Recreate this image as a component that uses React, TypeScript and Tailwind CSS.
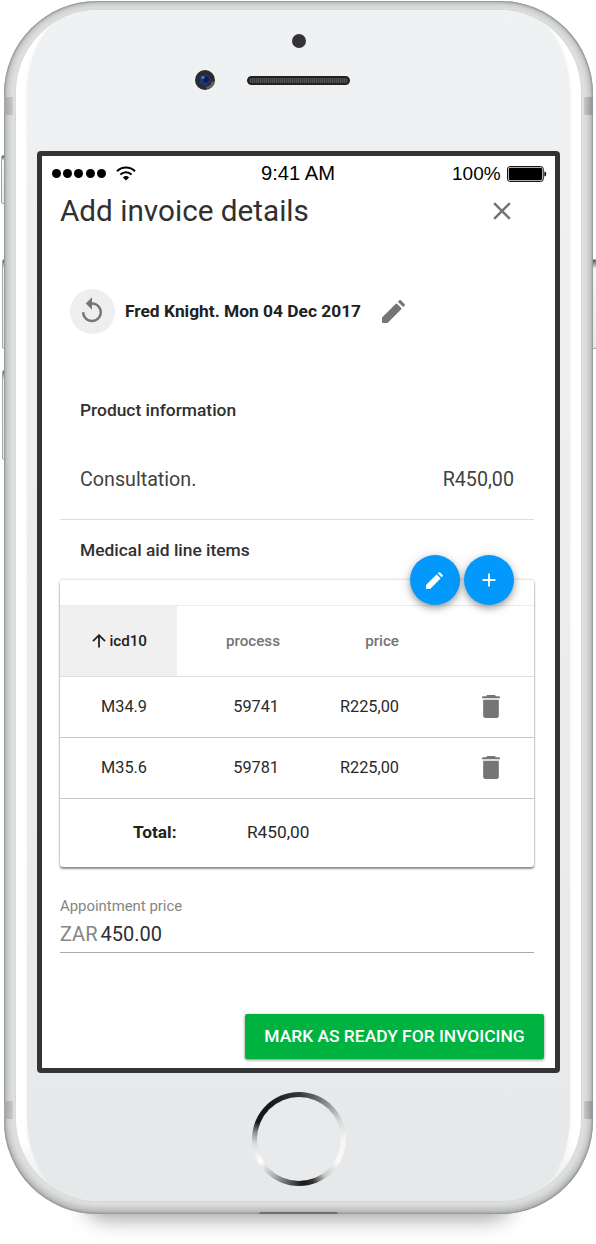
import React from "react";
import { MdAdd, MdClose, MdReplay } from "react-icons/md";

const items = [
  { code: "M34.9", process: "59741", price: "R225,00" },
  { code: "M35.6", process: "59781", price: "R225,00" },
];

function Pencil({ className }: { className: string }) {
  return (
    <svg className={className} viewBox="0 0 68 68" fill="currentColor">
      <path d="M0 52 41 11a2 2 0 0 1 3 0L57 24a2 2 0 0 1 0 3L17 67a3 3 0 0 1-2 1H3a3 3 0 0 1-3-3z" />
      <path d="M47 5.500 51 1.500a4 4 0 0 1 5.500 0l10 10a4 4 0 0 1 0 5.500l-4 4z" />
    </svg>
  );
}

function Trash({ className }: { className: string }) {
  return (
    <svg className={className} viewBox="0 0 54 69" fill="currentColor">
      <path d="M16 0h22a3 3 0 0 1 2.500 3.500H50a4 4 0 0 1 4 4V10H0V7.500a4 4 0 0 1 4-4h9.500A3 3 0 0 1 16 0z" />
      <path d="M3.500 14h47v48a7 7 0 0 1-7 7h-33a7 7 0 0 1-7-7z" />
    </svg>
  );
}

function StatusBar() {
  return (
    <div className="flex h-[35px] items-center pl-[10px] font-['Liberation_Sans'] text-[20px] leading-[35px] text-black">
      <div className="flex w-[209px] items-center gap-[2.2px]">
        {[0, 1, 2, 3, 4].map((i) => (
          <span key={i} className="size-[9px] rounded-full bg-black" />
        ))}
        <svg className="ml-[8.500px] h-[15px] w-[20px]" viewBox="0 0 20 15" fill="none" stroke="#000" strokeWidth="2">
          <path d="M1 5.200a12.800 12.800 0 0 1 18 0" />
          <path d="M4.300 8.600a8.100 8.100 0 0 1 11.400 0" />
          <path d="M10 14.600 6.900 11.400a4.400 4.400 0 0 1 6.200 0z" fill="#000" stroke="none" />
        </svg>
      </div>
      <div className="w-[191px] text-[20.200px] whitespace-nowrap">9:41 AM</div>
      <div className="flex items-center gap-[6px]">
        <span className="w-[49px] text-[19px]">100%</span>
        <svg className="h-[16px] w-[40px]" viewBox="0 0 40 16">
          <rect x="0.6" y="0.6" width="35.6" height="14.800" rx="2.400" fill="#fff" stroke="#000" strokeWidth="1" />
          <rect x="1.800" y="1.800" width="33.200" height="12.400" rx="1.400" fill="#000" />
          <path d="M37.400 5.400c2.400.6 2.400 4.600 0 5.200z" fill="#000" />
        </svg>
      </div>
    </div>
  );
}

function Fab({ children }: { children: React.ReactNode }) {
  return (
    <button className="flex size-[50px] items-center justify-center rounded-full bg-[#0398fb] text-white shadow-[0_3px_6px_rgba(0,0,0,0.3),0_2px_14px_rgba(0,0,0,0.14)]">
      {children}
    </button>
  );
}

function LineItems() {
  return (
    <div className="relative mr-[21px] ml-[18px] mt-[18px] h-[287px] rounded-[3px] bg-white text-[16.300px] text-[#2a2a2a] shadow-[0_2px_2px_rgba(0,0,0,0.4),0_0_3px_rgba(0,0,0,0.25)]">
      <div className="absolute -top-[25px] right-[20px] flex gap-[4.500px]">
        <Fab><Pencil className="size-[17px]" /></Fab>
        <Fab><MdAdd className="size-[22px]" /></Fab>
      </div>
      <div className="h-[26px] border-b border-[#ececec]" />
      <div className="flex h-[71px] items-center border-b border-[#dedede] text-[15.200px] font-medium text-[#757575]">
        <div className="flex h-full w-[117px] items-center justify-end gap-[3px] bg-[#f0f0f0] pr-[30px] text-[#212121]">
          <svg className="size-[14px]" viewBox="0 0 14 14" fill="none" stroke="currentColor" strokeWidth="1.800">
            <path d="M7 13.500V1.500M1 7.200 7 1.200l6 6" />
          </svg>
          <span>icd10</span>
        </div>
        <div className="w-[103px] text-right">process</div>
        <div className="w-[119px] text-right">price</div>
      </div>
      {items.map((item) => (
        <div key={item.code} className="flex h-[61px] items-center border-b border-[#c8c8c8]">
          <div className="w-[87px] text-right">{item.code}</div>
          <div className="w-[132px] text-right">{item.process}</div>
          <div className="w-[120px] text-right">{item.price}</div>
          <Trash className="mb-[2px] ml-[83px] h-[23px] w-[18px] text-[#757575]" />
        </div>
      ))}
      <div className="flex h-[68px] items-center text-[17.300px]">
        <div className="w-[116.500px] text-right font-bold text-[#212121]">Total:</div>
        <div className="w-[133px] text-right">R450,00</div>
      </div>
    </div>
  );
}

function InvoiceScreen() {
  return (
    <div className="flex h-[922px] w-[523px] flex-col rounded-[4px] border-[5px] border-[#343434] bg-white font-['Roboto'] text-[#303030]">
      <StatusBar />
      <div className="flex h-[40px] items-center justify-between pr-[38px] pl-[18px] text-[29.700px]">
        <h1>Add invoice details</h1>
        <MdClose className="size-[30px] text-[#757575]" />
      </div>
      <div className="mt-[58px] flex h-[45px] items-center pl-[28px]">
        <div className="flex size-[45px] items-center justify-center rounded-full bg-[#eee]">
          <MdReplay className="mr-px mb-[2px] size-[30px] text-[#757575]" />
        </div>
        <div className="ml-[10px] w-[257px] text-[17.350px] font-bold whitespace-nowrap text-[#212121]">Fred Knight. Mon 04 Dec 2017</div>
        <Pencil className="size-[23px] text-[#757575]" />
      </div>
      <h2 className="mt-[64px] pl-[38px] text-[17.400px] leading-[24px] font-medium">Product information</h2>
      <div className="mr-[21px] ml-[18px] mt-[17px] flex h-[81px] items-center justify-between border-b border-[#dedede] px-[20px] pt-[2px] text-[19.700px] text-[#424242]">
        <span>Consultation.</span>
        <span>R450,00</span>
      </div>
      <h2 className="mt-[18px] pl-[38px] text-[17.400px] leading-[24px] font-medium">Medical aid line items</h2>
      <LineItems />
      <div className="mr-[21px] ml-[18px] mt-[29px] flex h-[57px] flex-col border-b border-[#aaa]">
        <label className="text-[14.900px] leading-[20px] text-[#858585]">Appointment price</label>
        <div className="flex gap-[3px] pt-[5px] text-[20px] leading-[26px]">
          <span className="text-[#858585]">ZAR</span>
          <span>450.00</span>
        </div>
      </div>
      <button className="mt-[61px] mr-[11px] h-[45px] w-[299px] self-end rounded-[2px] bg-[#00b341] text-[17.400px] font-medium whitespace-nowrap text-white shadow-[0_1px_3px_rgba(0,0,0,0.5)]">
        MARK AS READY FOR INVOICING
      </button>
    </div>
  );
}

const sideButton =
  "absolute w-[6px] rounded-[2px] border border-[#a5a8a9] bg-linear-to-b from-[#555] via-[#f4f6f7] via-10% to-[#e6e9ea]";
const band = "absolute h-[18px] w-[9px]";

export default function App() {
  return (
    <div className="relative h-[1244px] w-[596px] overflow-hidden bg-white pt-px pl-[4px]">
      <div className="absolute top-[1170px] left-[85px] h-[40px] w-[426px] rounded-[40px] shadow-[0_8px_22px_rgba(0,0,0,0.4)]" />
      <div className={`${sideButton} top-[155px] left-px h-[49px]`} />
      <div className={`${sideButton} top-[259px] left-[2px] h-[90px]`} />
      <div className={`${sideButton} top-[370px] left-[2px] h-[90px]`} />
      <div className={`${sideButton} top-[259px] left-[591px] h-[90px]`} />
      <div className="relative h-[1213px] w-[589px] rounded-[93px] bg-[#e0e2e1] px-[12px] pt-[9px] pb-[13px] shadow-[inset_0_0_2px_1px_#8e9190,inset_0_-4px_8px_#b0b1b2,inset_0_0_9px_2px_#b4b7b6]">
        <div className={`${band} top-[96px] left-0 bg-linear-to-r from-[#a0a2a4] to-[#c8c9cb]`} />
        <div className={`${band} top-[96px] right-0 bg-linear-to-l from-[#8e9193] to-[#c8c9cb]`} />
        <div className={`${band} top-[1100px] left-0 bg-linear-to-r from-[#a0a2a4] to-[#c8c9cb]`} />
        <div className={`${band} top-[1100px] right-0 bg-linear-to-l from-[#8e9193] to-[#c8c9cb]`} />
        <div className="absolute bottom-0 left-[255px] h-[2px] w-[79px] rounded-t-[2px] bg-[#6d6e70]" />
        <div className="h-full overflow-hidden rounded-[82px] bg-linear-to-b from-white via-white via-95% to-[#e2e3e5] px-[11px] shadow-[0_0_2px_#c4c6c7]">
          <div className="flex h-full flex-col items-center rounded-[56px/84px] bg-linear-to-b from-[#f0f1f3] to-[#e7e8ea] shadow-[0_0_4px_#f0f1f3]">
            <div className="mt-[24px] size-[14px] rounded-full bg-[#343436]" />
            <div className="mt-[22px] flex h-[20px] w-full items-center pl-[168px]">
              <svg className="size-[20px]" viewBox="0 0 20 20">
                <circle cx="10" cy="10" r="10" fill="#2b2b2d" />
                <path d="M11 17a7 7 0 0 0 6-6l2 1a9 9 0 0 1-7 7z" fill="#666" />
                <circle cx="10" cy="10" r="5.500" fill="#1d3773" />
                <circle cx="11" cy="9.500" r="3" fill="#0b1b58" />
                <circle cx="8" cy="7.500" r="1.600" fill="#5577c5" />
              </svg>
              <div className="ml-[32px] h-[9px] w-[103px] rounded-full border-2 border-[#202020] bg-[repeating-linear-gradient(90deg,#3a3a3a_0_1px,#505050_1px_2px)]" />
            </div>
            <div className="mt-[61px]"><InvoiceScreen /></div>
            <div className="mt-[19px] size-[94px] rounded-full bg-[conic-gradient(from_0deg,#343537,#77797a_30deg,#d5d6d7_65deg,#f5f5f5_90deg,#fafafa_120deg,#c8c9ca_145deg,#333_162deg,#17181b_175deg,#505153_190deg,#b0b1b3_215deg,#fff_240deg,#d8d9da_265deg,#929395_278deg,#17181b_292deg,#17181b_320deg,#343537)] p-[5px]">
              <div className="h-full rounded-full bg-[#e9eaec]" />
            </div>
          </div>
        </div>
      </div>
    </div>
  );
}
